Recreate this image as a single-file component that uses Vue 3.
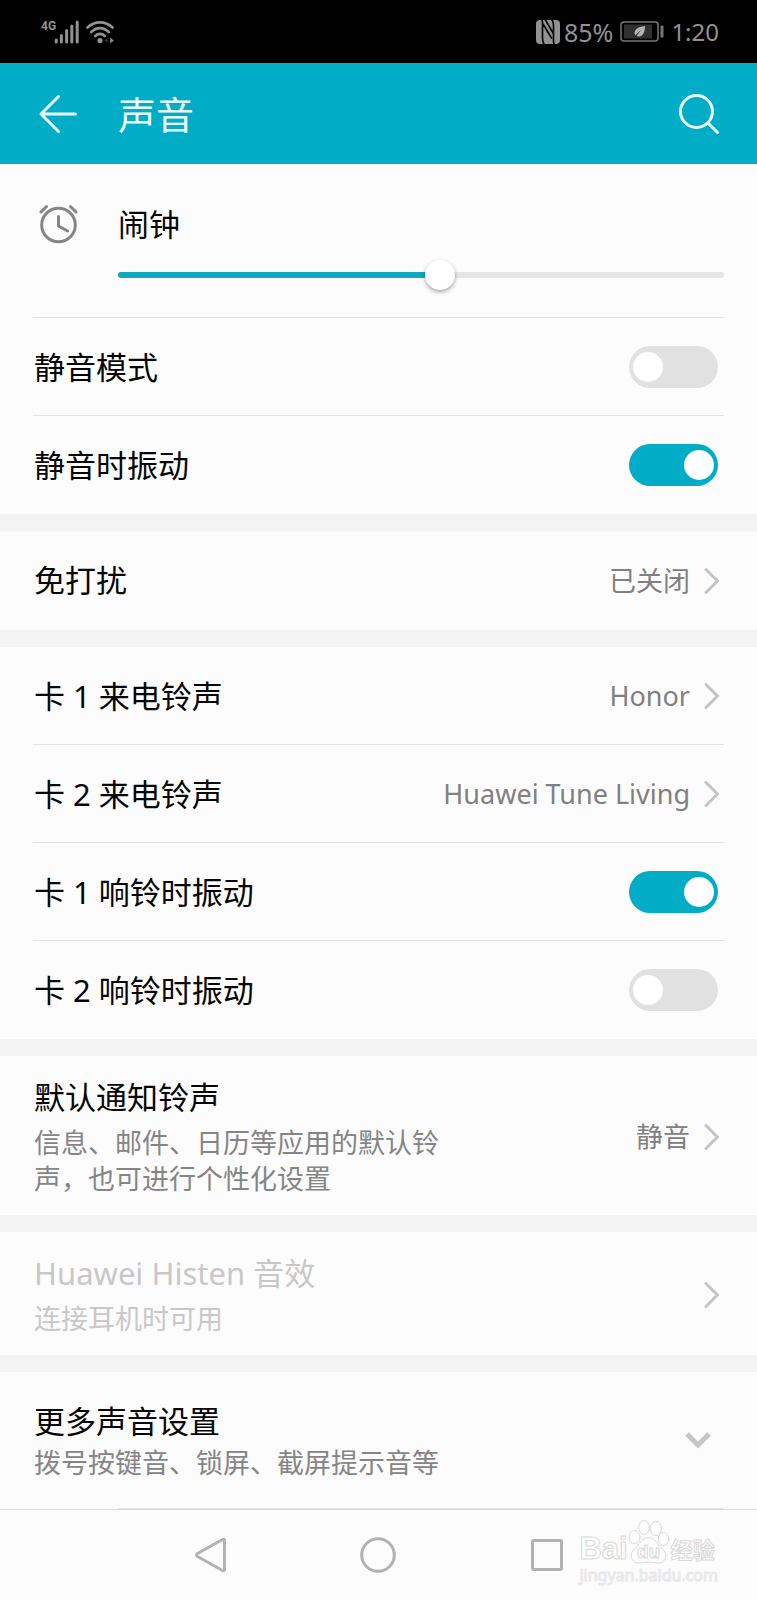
<script setup>
import { ref, reactive, computed } from 'vue'

const maxVolume = 15
const alarmVolume = ref(8)
const volumeRatio = computed(() => alarmVolume.value / maxVolume)

const silent = reactive([
  { id: 'silent-mode', label: '静音模式', on: false },
  { id: 'silent-vibrate', label: '静音时振动', on: true },
])

const ringtones = [
  { label: '卡 1 来电铃声', value: 'Honor' },
  { label: '卡 2 来电铃声', value: 'Huawei Tune Living' },
]

const vibration = reactive([
  { id: 'sim1-vibrate', label: '卡 1 响铃时振动', on: true },
  { id: 'sim2-vibrate', label: '卡 2 响铃时振动', on: false },
])
</script>

<template>
  <div class="screen" lang="zh-CN">
    <div class="status">
      <div class="status-group">
        <span class="network">4G</span>
        <svg class="signal" width="26" height="24" viewBox="0 0 26 24" aria-hidden="true">
          <path d="M2.2 20v2M7.4 15.500v6.500M12.600 10.500v11.500M17.800 6v16M23.200 2v20" />
        </svg>
        <svg class="wifi" width="28" height="24" viewBox="0 0 28 24" aria-hidden="true">
          <path class="arc" d="M1.500 7.500C8.500 .6 19.500 .6 26.500 7.500M5.300 12C10.500 6.800 17.500 6.800 22.700 12M9.300 16C12 13.200 16 13.200 18.700 16" />
          <circle cx="14" cy="20.500" r="2.600" />
          <path d="M24.300 17.500v6l3.400-3z" />
          <path class="dim" d="M21.500 18v5l-3-2.500z" />
        </svg>
      </div>
      <div class="status-group">
        <svg class="nfc" width="24" height="24" viewBox="0 0 24 24" aria-hidden="true">
          <rect x="0" y="0" width="24" height="24" rx="4" />
          <path d="M6 0C7 3 6.500 5 6.500 8V18C6.500 21 6.500 22 8 24M7 4L15.500 18M18 24C17 21 17.500 19 17.500 16V6C17.500 3 17.500 2 16 0M17 13L9.500 0" />
        </svg>
        <span class="battery-text">85%</span>
        <svg class="battery" width="44" height="21" viewBox="0 0 44 21" aria-hidden="true">
          <rect class="shell" x="1" y="1" width="37" height="19" rx="3" />
          <rect class="charge" x="4" y="3.500" width="28" height="14" />
          <rect class="tip" x="40.500" y="4.500" width="3" height="12" rx="1" />
          <path class="leaf" d="M25 5C20 6 14.500 7 14.500 12.500L15.300 14.200L21.500 8.500L16.500 15C22 17 25 12 25 5z" />
        </svg>
        <span class="time">1:20</span>
      </div>
    </div>

    <header class="bar">
      <button class="icon-button" type="button" aria-label="返回">
        <svg width="40" height="40" viewBox="0 0 40 40">
          <path d="M20.500 2.500L3 20L20.500 37.500M3 20H37.500" />
        </svg>
      </button>
      <h1>声音</h1>
      <button class="icon-button" type="button" aria-label="搜索">
        <svg width="42" height="42" viewBox="0 0 42 42">
          <circle cx="18.500" cy="18.500" r="16" />
          <path d="M30 30L39.500 39.500" />
        </svg>
      </button>
    </header>

    <main>
      <section>
        <div class="alarm divided">
          <svg class="clock" width="40" height="42" viewBox="0 0 40 42" aria-hidden="true">
            <circle cx="20.500" cy="22" r="16.800" />
            <path d="M20.500 13.500V23L29.500 28M3 9L8.500 3.500M38 9L32.500 3.500" />
          </svg>
          <div class="volume">
            <label for="alarm-volume">闹钟</label>
            <input
              id="alarm-volume"
              v-model.number="alarmVolume"
              type="range"
              min="0"
              :max="maxVolume"
              :style="{ '--ratio': volumeRatio }"
            />
          </div>
        </div>
        <label
          v-for="(item, i) in silent"
          :key="item.id"
          class="row"
          :class="{ divided: i < silent.length - 1 }"
          :for="item.id"
        >
          <span class="title">{{ item.label }}</span>
          <input :id="item.id" v-model="item.on" class="toggle" type="checkbox" />
        </label>
      </section>

      <section>
        <button class="row single" type="button">
          <span class="title">免打扰</span>
          <span class="value">已关闭</span>
          <svg class="chevron" width="17" height="28" viewBox="0 0 17 28" aria-hidden="true"><path d="M4 2.500L15.500 14L4 25.500" /></svg>
        </button>
      </section>

      <section>
        <button v-for="item in ringtones" :key="item.label" class="row divided" type="button">
          <span class="title">{{ item.label }}</span>
          <span class="value">{{ item.value }}</span>
          <svg class="chevron" width="17" height="28" viewBox="0 0 17 28" aria-hidden="true"><path d="M4 2.500L15.500 14L4 25.500" /></svg>
        </button>
        <label
          v-for="(item, i) in vibration"
          :key="item.id"
          class="row"
          :class="{ divided: i < vibration.length - 1 }"
          :for="item.id"
        >
          <span class="title">{{ item.label }}</span>
          <input :id="item.id" v-model="item.on" class="toggle" type="checkbox" />
        </label>
      </section>

      <section>
        <button class="row tall" type="button">
          <span class="text">
            <span class="title">默认通知铃声</span>
            <span class="note">信息、邮件、日历等应用的默认铃声，也可进行个性化设置</span>
          </span>
          <span class="value">静音</span>
          <svg class="chevron" width="17" height="28" viewBox="0 0 17 28" aria-hidden="true"><path d="M4 2.500L15.500 14L4 25.500" /></svg>
        </button>
      </section>

      <section>
        <button class="row tall" type="button" disabled>
          <span class="text">
            <span class="title">Huawei Histen 音效</span>
            <span class="note">连接耳机时可用</span>
          </span>
          <svg class="chevron" width="17" height="28" viewBox="0 0 17 28" aria-hidden="true"><path d="M4 2.500L15.500 14L4 25.500" /></svg>
        </button>
      </section>

      <section>
        <button class="row more" type="button" aria-expanded="false">
          <span class="text">
            <span class="title">更多声音设置</span>
            <span class="note">拨号按键音、锁屏、截屏提示音等</span>
          </span>
          <svg class="expand" width="26" height="18" viewBox="0 0 26 18" aria-hidden="true"><path d="M2 2L13 13L24 2" /></svg>
        </button>
      </section>
    </main>

    <nav class="nav">
      <button type="button" aria-label="后退">
        <svg width="36" height="36" viewBox="0 0 36 36"><path d="M32.500 3.500V32.500Q32.500 34.500 30.500 33.500L5.500 19.500Q3.500 18 5.500 16.500L30.500 2.500Q32.500 1.500 32.500 3.500z" /></svg>
      </button>
      <button type="button" aria-label="主屏幕">
        <svg width="36" height="36" viewBox="0 0 36 36"><circle cx="18" cy="18" r="16.300" /></svg>
      </button>
      <button type="button" aria-label="最近任务">
        <svg width="36" height="36" viewBox="0 0 36 36"><rect x="3.500" y="3.500" width="29" height="29" rx="1.500" /></svg>
      </button>
      <div class="watermark">
        <div class="brand">
          <span class="bai">Bai</span>
          <svg width="42" height="45" viewBox="0 0 42 45">
            <ellipse cx="6.500" cy="18" rx="5.500" ry="6.500" />
            <ellipse cx="16" cy="8.500" rx="5.300" ry="7" />
            <ellipse cx="28" cy="9.500" rx="5.500" ry="7" />
            <ellipse cx="35.500" cy="20" rx="5.300" ry="6.500" />
            <path d="M20.500 18.500C13.500 18.500 11.500 26 6.500 30C.5 35 3.500 44 10.500 44C14.500 44 16.500 43 20.500 43C24.500 43 26.500 44 30.500 44C37.500 44 40.500 35 34.500 30C29.500 26 27.500 18.500 20.500 18.500z" />
            <text x="20.500" y="39" text-anchor="middle">du</text>
          </svg>
          <span class="jingyan">经验</span>
        </div>
        <span class="url">jingyan.baidu.com</span>
      </div>
    </nav>
  </div>
</template>

<style>
body {
  margin: 0;
  background: #fcfcfc;
}
</style>

<style scoped>
.screen {
  display: flex;
  flex-direction: column;
  min-height: 100vh;
  font-family: "Noto Sans", "Noto Sans CJK SC", sans-serif;
  color: #060606;
  background: #fcfcfc;
}

.screen * {
  box-sizing: border-box;
}

button {
  padding: 0;
  border: 0;
  background: none;
  font: inherit;
  color: inherit;
  text-align: left;
}

svg {
  display: block;
  flex: none;
  fill: none;
  stroke-linecap: round;
  stroke-linejoin: round;
}

.status {
  display: flex;
  justify-content: space-between;
  align-items: center;
  height: 63px;
  padding: 0 38px 0 41px;
  background: #000;
  color: #929292;
  font-size: 25px;
  line-height: 34px;
}

.status-group {
  display: flex;
  align-items: center;
}

.network {
  align-self: flex-start;
  font-family: Roboto, sans-serif;
  font-size: 12px;
  font-weight: 700;
  line-height: 12px;
}

.signal {
  margin-right: 6px;
  margin-left: -2px;
  stroke: #929292;
  stroke-width: 3;
}

.wifi {
  fill: #929292;
}

.wifi .arc {
  fill: none;
  stroke: #929292;
  stroke-width: 2.6;
}

.wifi .dim {
  fill: #333;
}

.nfc {
  margin-right: 4px;
  fill: #929292;
}

.nfc path {
  stroke: #000;
  stroke-width: 1.6;
  fill: none;
}

.battery {
  margin: 0 7px;
}

.battery .shell {
  stroke: #777;
  stroke-width: 1.5;
}

.battery .charge {
  fill: #303030;
}

.battery .tip {
  fill: #777;
}

.battery .leaf {
  fill: #b4b4b4;
}

.time {
  font-size: 24px;
}

.bar {
  display: flex;
  align-items: center;
  height: 101px;
  padding: 0 37px 0 38px;
  background: #00acc6;
  color: #e9ffff;
}

.bar svg {
  stroke: #e9ffff;
  stroke-width: 3;
}

.bar h1 {
  flex: 1;
  margin: 0 0 0 40px;
  font-size: 38px;
  font-weight: 400;
  line-height: 54px;
}

section + section {
  border-top: 17px solid #f3f3f3;
}

.alarm,
.row {
  position: relative;
  display: flex;
  align-items: center;
  width: 100%;
  min-height: 98px;
  padding: 0 38px 0 34px;
}

.row.single {
  min-height: 99px;
}

.divided::after {
  content: "";
  position: absolute;
  right: 33px;
  bottom: 0;
  left: 33px;
  height: 1px;
  background: #e4e4e4;
}

.alarm {
  align-items: flex-start;
  min-height: 154px;
  padding: 39px 33px 0 38px;
}

.clock {
  margin-right: 40px;
  stroke: #858585;
  stroke-width: 3;
}

.volume {
  display: flex;
  flex: 1;
  flex-direction: column;
}

.volume label,
.title {
  font-size: 31px;
  line-height: 43px;
}

.volume input {
  appearance: none;
  width: 100%;
  height: 30px;
  margin: 14px 0 0;
  background: none;
}

.volume input::-webkit-slider-runnable-track {
  height: 6px;
  border-radius: 3px;
  background:
    linear-gradient(#10a8bc, #10a8bc) 0 0 / calc(15px + (100% - 30px) * var(--ratio)) 100% no-repeat,
    #e6e6e6;
}

.volume input::-webkit-slider-thumb {
  appearance: none;
  width: 30px;
  height: 30px;
  margin-top: -12px;
  border-radius: 50%;
  background: #fff;
  box-shadow: 0 2px 4px rgba(0, 0, 0, 0.35);
}

.row .title,
.row .text {
  flex: 1;
}

.text {
  display: flex;
  flex-direction: column;
  gap: 6px;
}

.text .title {
  flex: none;
}

.note {
  max-width: 412px;
  color: #858585;
  font-size: 27px;
  line-height: 36px;
}

.value {
  margin-right: 12px;
  color: #808080;
  font-size: 27px;
  line-height: 36px;
}

.chevron {
  stroke: #c4c4c4;
  stroke-width: 3;
}

.tall {
  padding-top: 20px;
  padding-bottom: 18px;
}

.more {
  min-height: 137px;
  padding-right: 46px;
}

.more .text {
  gap: 2px;
}

.more::after {
  content: "";
  position: absolute;
  right: 33px;
  bottom: 0;
  left: 118px;
  height: 1px;
  background: #e4e4e4;
}

.expand {
  stroke: #c6c6c6;
  stroke-width: 5;
  stroke-linecap: butt;
  stroke-linejoin: miter;
}

.row:disabled .title,
.row:disabled .note {
  color: #c8c8c8;
}

.toggle {
  appearance: none;
  flex: none;
  width: 89px;
  height: 42px;
  margin: 0 1px 0 0;
  padding: 6px 4px;
  border-radius: 21px;
  background: #e1e1e1;
}

.toggle::before {
  content: "";
  display: block;
  width: 30px;
  height: 30px;
  border-radius: 50%;
  background: #fff;
}

.toggle:checked {
  background: #00acc6;
}

.toggle:checked::before {
  margin-left: auto;
}

.nav {
  position: relative;
  display: grid;
  flex: 1;
  grid-template-columns: repeat(3, 1fr);
  min-height: 91px;
  padding: 0 126px;
  border-top: 1px solid #dadada;
}

.nav button {
  display: flex;
  align-items: center;
  justify-content: center;
}

.nav button svg {
  stroke: #b2b2b2;
  stroke-width: 3;
}

.watermark {
  position: absolute;
  right: 39px;
  bottom: 14px;
  color: #fefefe;
  -webkit-text-stroke: 1px #d9d9d9;
}

.brand {
  display: flex;
  align-items: flex-end;
}

.brand svg {
  stroke: #d9d9d9;
  stroke-width: 1;
}

.brand ellipse,
.brand path {
  fill: #fefefe;
}

.brand text {
  fill: #fefefe;
  font-family: "Liberation Sans", sans-serif;
  font-size: 19px;
  font-weight: 700;
}

.bai {
  font-family: "Liberation Sans", sans-serif;
  font-size: 31px;
  font-weight: 700;
  line-height: 30px;
}

.jingyan {
  padding-left: 1px;
  font-size: 22px;
  font-weight: 700;
  line-height: 30px;
}

.url {
  display: block;
  font-size: 16px;
  line-height: 22px;
  -webkit-text-stroke: 1px #e6e6e6;
}
</style>
